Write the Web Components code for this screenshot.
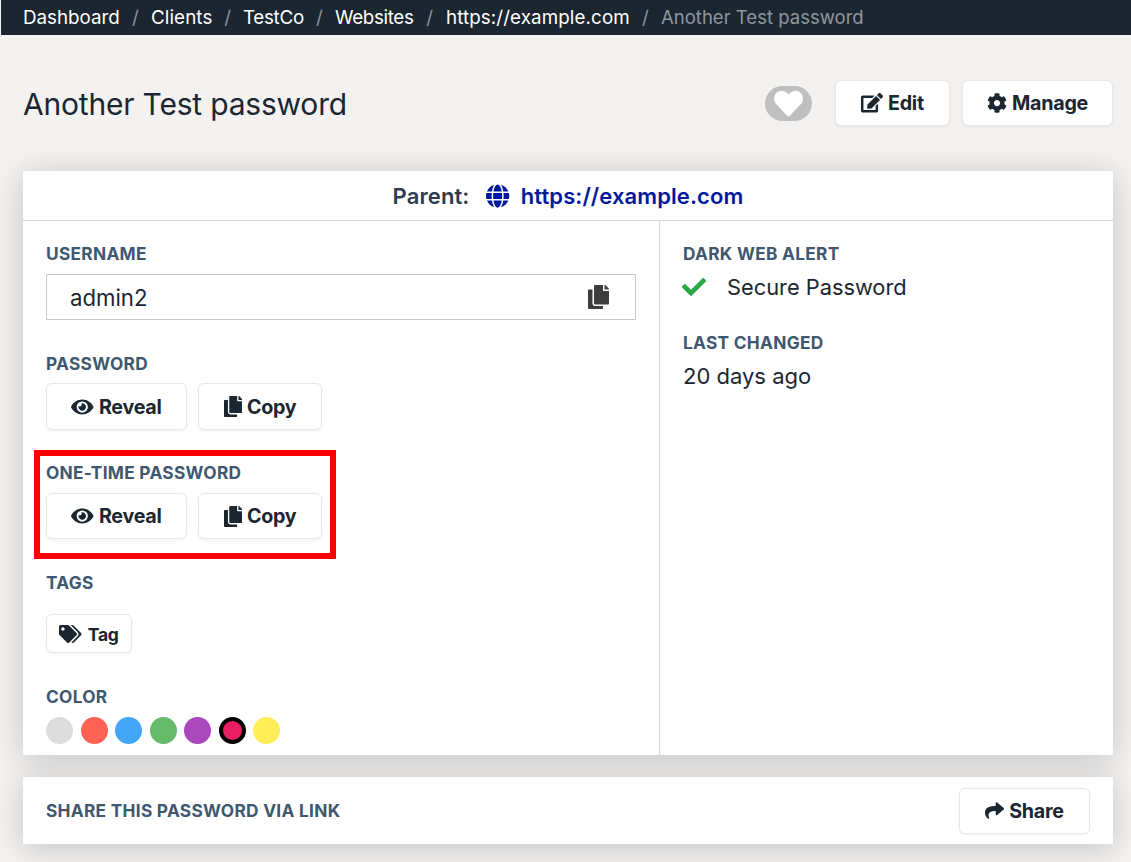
<!DOCTYPE html>
<html><head><meta charset="utf-8">
<style>
html,body{margin:0;padding:0;height:862px;overflow:hidden;background:#f3f2f1;font-family:Inter,"Liberation Sans",sans-serif;color:#1b2631}
x-app{display:block;position:relative;height:862px;overflow:hidden}
</style></head><body>
<x-app>
<x-crumbs></x-crumbs>
<x-heading></x-heading>
<x-card class="main">
  <x-parent slot="top"></x-parent>
  <x-details></x-details>
</x-card>
<x-share></x-share>
</x-app>
<script>
const I={
copy:[448,'M320 448v40c0 13.255-10.745 24-24 24H24c-13.255 0-24-10.745-24-24V120c0-13.255 10.745-24 24-24h72v296c0 30.879 25.121 56 56 56h168zm0-344V0H152c-13.255 0-24 10.745-24 24v368c0 13.255 10.745 24 24 24h272c13.255 0 24-10.745 24-24V128H344c-13.2 0-24-10.8-24-24zm120.971-31.029L375.029 7.029A24 24 0 0 0 358.059 0H352v96h96v-6.059a24 24 0 0 0-7.029-16.97z'],
eye:[576,'M572.52 241.4C518.29 135.59 410.93 64 288 64S57.68 135.64 3.48 241.41a32.35 32.35 0 0 0 0 29.19C57.71 376.41 165.07 448 288 448s230.32-71.64 284.52-177.41a32.35 32.35 0 0 0 0-29.19zM288 400a144 144 0 1 1 144-144 143.93 143.93 0 0 1-144 144zm0-240a95.31 95.31 0 0 0-25.31 3.79 47.85 47.85 0 0 1-66.9 66.9A95.78 95.78 0 1 0 288 160z'],
edit:[576,'M402.6 83.2l90.2 90.2c3.8 3.8 3.8 10 0 13.8L274.4 405.6l-92.8 10.3c-12.4 1.4-22.9-9.1-21.5-21.5l10.3-92.8L388.8 83.2c3.8-3.8 10-3.8 13.8 0zm162-22.9l-48.8-48.8c-15.2-15.2-39.9-15.2-55.2 0l-35.4 35.4c-3.8 3.8-3.8 10 0 13.8l90.2 90.2c3.8 3.8 10 3.8 13.8 0l35.4-35.4c15.2-15.3 15.2-40 0-55.2zM384 346.2V448H64V128h229.8c3.2 0 6.2-1.3 8.5-3.5l40-40c7.6-7.6 2.2-20.5-8.5-20.5H48C21.5 64 0 85.5 0 112v352c0 26.5 21.5 48 48 48h352c26.5 0 48-21.5 48-48V306.2c0-10.7-12.9-16-20.5-8.5l-40 40c-2.2 2.3-3.5 5.3-3.5 8.5z'],
cog:[512,'M487.4 315.7l-42.6-24.6c4.3-23.2 4.3-47 0-70.2l42.6-24.6c4.9-2.8 7.1-8.6 5.5-14-11.1-35.6-30-67.8-54.7-94.6-3.8-4.1-10-5.1-14.8-2.3L380.8 110c-17.9-15.4-38.5-27.3-60.8-35.1V25.8c0-5.6-3.9-10.5-9.4-11.7-36.7-8.2-74.3-7.8-109.2 0-5.5 1.2-9.4 6.1-9.4 11.7V75c-22.2 7.9-42.8 19.8-60.8 35.1L88.7 85.5c-4.9-2.8-11-1.9-14.8 2.3-24.7 26.7-43.6 58.9-54.7 94.6-1.7 5.4.6 11.2 5.5 14L67.3 221c-4.3 23.2-4.3 47 0 70.2l-42.6 24.6c-4.9 2.8-7.1 8.6-5.5 14 11.1 35.6 30 67.8 54.7 94.6 3.8 4.1 10 5.1 14.8 2.3l42.6-24.6c17.9 15.4 38.5 27.3 60.8 35.1v49.2c0 5.6 3.9 10.5 9.4 11.7 36.7 8.2 74.3 7.8 109.2 0 5.5-1.2 9.4-6.1 9.4-11.7v-49.2c22.2-7.9 42.8-19.8 60.8-35.1l42.6 24.6c4.9 2.8 11 1.9 14.8-2.3 24.7-26.7 43.6-58.9 54.7-94.6 1.5-5.5-.7-11.3-5.6-14.1zM256 336c-44.1 0-80-35.9-80-80s35.9-80 80-80 80 35.9 80 80-35.9 80-80 80z'],
tags:[640,'M497.941 225.941L286.059 14.059A48 48 0 0 0 252.118 0H48C21.49 0 0 21.49 0 48v204.118a48 48 0 0 0 14.059 33.941l211.882 211.882c18.744 18.745 49.136 18.746 67.882 0l204.118-204.118c18.745-18.745 18.745-49.137 0-67.882zM112 160c-26.51 0-48-21.49-48-48s21.49-48 48-48 48 21.49 48 48-21.49 48-48 48zm513.941 133.823L421.823 497.941c-18.745 18.745-49.137 18.745-67.882 0l-.36-.36L527.64 323.522c16.999-16.999 26.36-39.6 26.36-63.64s-9.362-46.641-26.36-63.64L331.397 0h48.721a48 48 0 0 1 33.941 14.059l211.882 211.882c18.745 18.745 18.745 49.137 0 67.882z'],
globe:[496,'M336.5 160C322 70.7 287.8 8 248 8s-74 62.7-88.5 152h177zM152 256c0 22.2 1.2 43.5 3.3 64h185.3c2.1-20.5 3.3-41.8 3.3-64s-1.2-43.5-3.3-64H155.3c-2.1 20.5-3.3 41.8-3.3 64zm324.7-96c-28.6-67.9-86.5-120.4-158-141.6 24.4 33.8 41.2 84.7 50 141.6h108zM177.2 18.4C105.8 39.6 47.8 92.1 19.3 160h108c8.7-56.9 25.5-107.8 49.9-141.6zM487.4 192H372.7c2.1 21 3.3 42.5 3.3 64s-1.2 43-3.3 64h114.6c5.5-20.5 8.6-41.8 8.6-64s-3.1-43.5-8.5-64zM120 256c0-21.5 1.2-43 3.3-64H8.6C3.2 212.5 0 233.8 0 256s3.2 43.5 8.6 64h114.6c-2-21-3.2-42.5-3.2-64zm39.5 96c14.5 89.3 48.7 152 88.5 152s74-62.7 88.5-152h-177zm159.3 141.6c71.4-21.2 129.4-73.7 158-141.6h-108c-8.8 56.9-25.6 107.8-50 141.6zM19.3 352c28.6 67.9 86.5 120.4 158 141.6-24.4-33.8-41.2-84.7-50-141.6h-108z'],
check:[512,'M173.898 439.404l-166.4-166.4c-9.997-9.997-9.997-26.206 0-36.204l36.203-36.204c9.997-9.998 26.207-9.998 36.204 0L192 312.69 432.095 72.596c9.997-9.997 26.207-9.997 36.204 0l36.203 36.204c9.997 9.997 9.997 26.206 0 36.204l-294.4 294.401c-9.998 9.997-26.207 9.997-36.204-.001z'],
share:[512,'M503.691 189.836L327.687 37.851C312.281 24.546 288 35.347 288 56.015v80.053C127.371 137.907 0 170.1 0 322.326c0 61.441 39.581 122.309 83.333 154.132 13.653 9.931 33.111-2.533 28.077-18.631C66.066 312.814 132.917 274.316 288 272.085V360c0 20.7 24.3 31.453 39.687 18.164l176.004-152c11.071-9.562 11.086-26.753 0-36.328z'],
heart:[512,'M462.3 62.6C407.5 15.9 326 24.3 275.7 76.2L256 96.5l-19.7-20.3C186.1 24.3 104.5 15.9 49.7 62.6c-62.8 53.6-66.1 149.8-9.9 207.9l193.5 199.8c12.5 12.9 32.8 12.9 45.3 0l193.5-199.8c56.3-58.1 53-154.3-9.8-207.9z']
};
const svg=(n,h,c='currentColor')=>`<svg width="${(h*I[n][0]/512).toFixed(2)}" height="${h}" viewBox="0 0 ${I[n][0]} 512" fill="${c}" style="display:block;flex:none"><path d="${I[n][1]}"/></svg>`;
function def(name,html){customElements.define(name,class extends HTMLElement{constructor(){super();this.attachShadow({mode:'open'}).innerHTML=typeof html==='function'?html(this):html;}});}

def('x-btn',el=>{
  const icon=el.getAttribute('icon'),w=el.getAttribute('w'),h=el.getAttribute('h'),s=el.getAttribute('size')||19,fs=el.getAttribute('fs')||19.7,gap=el.getAttribute('gap')||5;
  return `<style>:host{display:block;flex:none}
  .b{box-sizing:border-box;width:${w}px;height:${h}px;display:flex;align-items:center;justify-content:center;gap:${gap}px;background:#fff;border:1px solid #e8e8e8;border-radius:6px;box-shadow:0 1px 3px rgba(0,0,0,.06);font:700 ${fs}px/1 Inter,sans-serif;color:#1b2631;letter-spacing:-.25px}
  span{position:relative;top:1px}</style>
  <div class="b">${svg(icon,+s)}<span><slot></slot></span></div>`;
});

def('x-crumbs',()=>{
  const items=[['Dashboard',128,0],['Clients',92,.1],['TestCo',92,-.3],['Websites',111,-.35],['https://example.com',215,.1]];
  return `<style>:host{display:block;margin-left:1px;height:35px;background:#1b2631;box-sizing:border-box;padding-left:22px;font:400 18.8px/35px Inter,sans-serif;color:#fff}
  .r{display:flex;white-space:nowrap}.i{display:flex;flex:none}.s{color:#8b949c;flex:1;text-align:center}.c{color:#8f979e;font-size:18.55px}</style>
  <div class="r">${items.map(([t,w,l])=>`<span class="i" style="width:${w}px"><span style="letter-spacing:${l}px">${t}</span><span class="s">/</span></span>`).join('')}<span class="c">Another Test password</span></div>`;
});

def('x-heading',()=>`<style>:host{display:flex;align-items:center;height:136px;box-sizing:border-box;padding:0 18px 0 23px}
h1{margin:2px 0 0;font:400 30px/1 Inter,sans-serif;color:#1b2631;flex:1;letter-spacing:-.2px}
.h{width:47px;height:35px;border-radius:18px;background:#bfbfbf;display:flex;align-items:center;justify-content:center;margin-right:23px}
.a{display:flex;gap:12px}</style>
<h1>Another Test password</h1>
<div class="h">${svg('heart',29,'#fff')}</div>
<div class="a"><x-btn icon="edit" w="115" h="46" size="19.5">Edit</x-btn><x-btn icon="cog" w="151" h="46" size="20" gap="5">Manage</x-btn></div>`);

def('x-card',()=>`<style>:host{display:block;margin:0 18px 0 23px;background:#fff;box-shadow:0 4px 30px rgba(0,0,0,.2)}</style><slot name="top"></slot><slot></slot>`);

def('x-parent',()=>`<style>:host{display:flex;height:50px;box-sizing:border-box;border-bottom:1px solid #d4d4d4;align-items:center;justify-content:center;font:600 22px/1 Inter,sans-serif;letter-spacing:.1px;color:#2d3c4e}
.l{color:#00189e;display:flex;align-items:center;gap:11px;margin-left:17px}</style>
<span>Parent:</span><span class="l">${svg('globe',24)}<span>https://example.com</span></span>`);

def('x-label',()=>`<style>:host{display:block;font:700 17.3px/24px Inter,sans-serif;letter-spacing:.28px;color:#3f5870;white-space:nowrap}</style><slot></slot>`);

def('x-details',()=>`<style>:host{display:flex;height:534px}
.l{width:637px;box-sizing:border-box;padding:21px 23px 0;border-right:1px solid #d4d4d4}
.r{flex:1;padding:21px 23px 0}
.i{box-sizing:border-box;width:590px;height:46px;margin:8px 0 0;border:1px solid #c8c8c8;display:flex;align-items:center;justify-content:space-between;padding:0 26px 0 23px;font:400 22.2px/1 Inter,sans-serif;color:#1b2631}
.i span{position:relative;top:1px}
.i svg{color:#3d3d3d}
.row{display:flex;gap:11px;margin-top:7px}
.sec{display:flex;align-items:center;font:400 21.8px/1 Inter,sans-serif;margin-top:9px;color:#1b2631}
.sec span{position:relative;top:1px}
.sec svg{margin-right:21px;margin-left:-1px}
.d{font:400 22px/1 Inter,sans-serif;margin-top:10px;color:#1b2631}
.sw{display:flex;gap:7.5px;margin-top:8px}
.sw i{display:block;width:27px;height:27px;border-radius:50%;box-sizing:border-box}
</style>
<div class="l">
<x-label>USERNAME</x-label>
<div class="i"><span>admin2</span>${svg('copy',24)}</div>
<x-label style="margin-top:32px">PASSWORD</x-label>
<div class="row"><x-btn icon="eye" w="141" h="47" size="20">Reveal</x-btn><x-btn icon="copy" w="124" h="47" size="21">Copy</x-btn></div>
<x-label style="margin-top:31px">ONE-TIME PASSWORD</x-label>
<div class="row" style="margin-top:8px"><x-btn icon="eye" w="141" h="46" size="20">Reveal</x-btn><x-btn icon="copy" w="124" h="46" size="21">Copy</x-btn></div>
<x-label style="margin-top:32px">TAGS</x-label>
<div class="row" style="margin-top:19px"><x-btn icon="tags" w="86" h="39" size="18" fs="17.5" gap="6">Tag</x-btn></div>
<x-label style="margin-top:32px">COLOR</x-label>
<div class="sw"><i style="background:#dcdcdc"></i><i style="background:#ff6155"></i><i style="background:#42a5f5"></i><i style="background:#66bb6a"></i><i style="background:#ab47bc"></i><i style="background:#e91e63;border:4px solid #000"></i><i style="background:#ffee58"></i></div>
</div>
<div class="r">
<x-label>DARK WEB ALERT</x-label>
<div class="sec">${svg('check',24,'#28a745')}<span>Secure Password</span></div>
<x-label style="margin-top:32px">LAST CHANGED</x-label>
<div class="d">20 days ago</div>
</div>`);

def('x-share',()=>`<style>:host{display:flex;align-items:center;justify-content:space-between;margin:22px 18px 0 23px;height:67px;box-sizing:border-box;padding:0 23px;background:#fff;box-shadow:0 4px 30px rgba(0,0,0,.2)}</style>
<x-label>SHARE THIS PASSWORD VIA LINK</x-label><x-btn icon="share" w="131" h="46">Share</x-btn>`);

def('x-callout',()=>`<style>:host{display:block;position:absolute;left:34px;top:450px;width:302px;height:109px;box-sizing:border-box;border:6px solid #f00;pointer-events:none}</style>`);
document.querySelector('x-app').appendChild(document.createElement('x-callout'));
</script>
</body></html>
